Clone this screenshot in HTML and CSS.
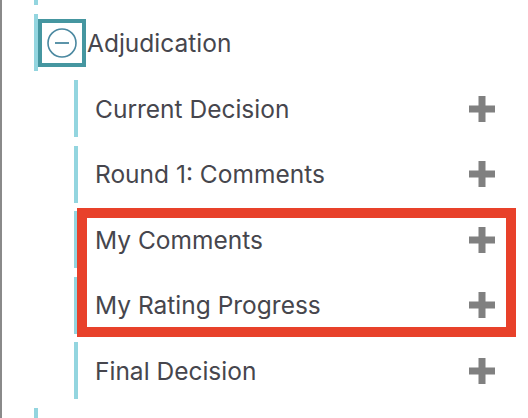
FILE: index.html
```html
<!DOCTYPE html>
<html lang="en">
<head>
    <meta charset="UTF-8">
    <meta name="viewport" content="width=device-width, initial-scale=1.0">
    <title>Adjudication</title>
    <link rel="stylesheet" href="styles.css">
</head>
<body>
    <div class="panel">
        <ul class="tree">
            <li class="node node-stub"></li>

            <li class="node open">
                <div class="node-head">
                    <button class="toggle" aria-label="Collapse">
                        <svg width="30" height="30" viewBox="0 0 30 30">
                            <circle cx="15" cy="15" r="14" fill="none" stroke="#4a88a0" stroke-width="1.6"/>
                            <line x1="8" y1="15" x2="22" y2="15" stroke="#4a88a0" stroke-width="1.8"/>
                        </svg>
                    </button>
                    <span class="node-label">Adjudication</span>
                </div>

                <ul class="children">
                    <li class="child">
                        <span class="child-label">Current Decision</span>
                        <svg class="plus" width="26" height="26" viewBox="0 0 26 26"><rect x="0" y="9.5" width="26" height="7"/><rect x="9.5" y="0" width="7" height="26"/></svg>
                    </li>
                    <li class="child">
                        <span class="child-label">Round 1: Comments</span>
                        <svg class="plus" width="26" height="26" viewBox="0 0 26 26"><rect x="0" y="9.5" width="26" height="7"/><rect x="9.5" y="0" width="7" height="26"/></svg>
                    </li>
                    <li class="child">
                        <span class="child-label">My Comments</span>
                        <svg class="plus" width="26" height="26" viewBox="0 0 26 26"><rect x="0" y="9.5" width="26" height="7"/><rect x="9.5" y="0" width="7" height="26"/></svg>
                    </li>
                    <li class="child">
                        <span class="child-label">My Rating Progress</span>
                        <svg class="plus" width="26" height="26" viewBox="0 0 26 26"><rect x="0" y="9.5" width="26" height="7"/><rect x="9.5" y="0" width="7" height="26"/></svg>
                    </li>
                    <li class="child">
                        <span class="child-label">Final Decision</span>
                        <svg class="plus" width="26" height="26" viewBox="0 0 26 26"><rect x="0" y="9.5" width="26" height="7"/><rect x="9.5" y="0" width="7" height="26"/></svg>
                    </li>
                </ul>
            </li>

            <li class="node node-stub node-stub-next"></li>
        </ul>

        <!-- annotation drawn over the list -->
        <div class="highlight"></div>
    </div>
</body>
</html>
```

FILE: styles.css
```css
html, body {
    margin: 0;
    padding: 0;
    background-color: white;
}
body {
    font-family: Inter, "Liberation Sans", Arial, sans-serif;
    color: #46464d;
    overflow: hidden;
}
.panel {
    position: relative;
    height: 418px;
    border-left: 2px solid #8a8a8a;
    padding-left: 32px;
    box-sizing: border-box;
}
.tree {
    list-style: none;
    margin: 0;
    padding: 0;
}
.node {
    margin-bottom: 9px;
}
.node-stub {
    width: 4px;
    height: 5px;
    background-color: #93d5df;
}
.node-stub-next {
    height: 20px;
}
.node-head {
    display: flex;
    align-items: center;
    height: 57px;
    border-left: 4px solid #93d5df;
}
.toggle {
    width: 48px;
    height: 48px;
    padding: 0;
    border: 4px solid #4596a0;
    background: white;
    display: flex;
    align-items: center;
    justify-content: center;
    cursor: pointer;
}
.toggle svg {
    display: block;
}
.node-label {
    font-size: 24.5px;
    margin-left: 1px;
}
.children {
    list-style: none;
    margin: 9px 0 0 40px;
    padding: 0;
    display: flex;
    flex-direction: column;
    gap: 8.5px;
}
.child {
    display: flex;
    align-items: center;
    justify-content: space-between;
    height: 57px;
    border-left: 4px solid #93d5df;
    padding-left: 17px;
    padding-right: 33px;
}
.child-label {
    font-size: 24.5px;
}
.plus {
    fill: #808080;
    flex-shrink: 0;
}
.highlight {
    position: absolute;
    left: 75px;
    top: 208px;
    width: 439px;
    height: 129px;
    border: 10px solid #e8412a;
    box-sizing: border-box;
}
```
